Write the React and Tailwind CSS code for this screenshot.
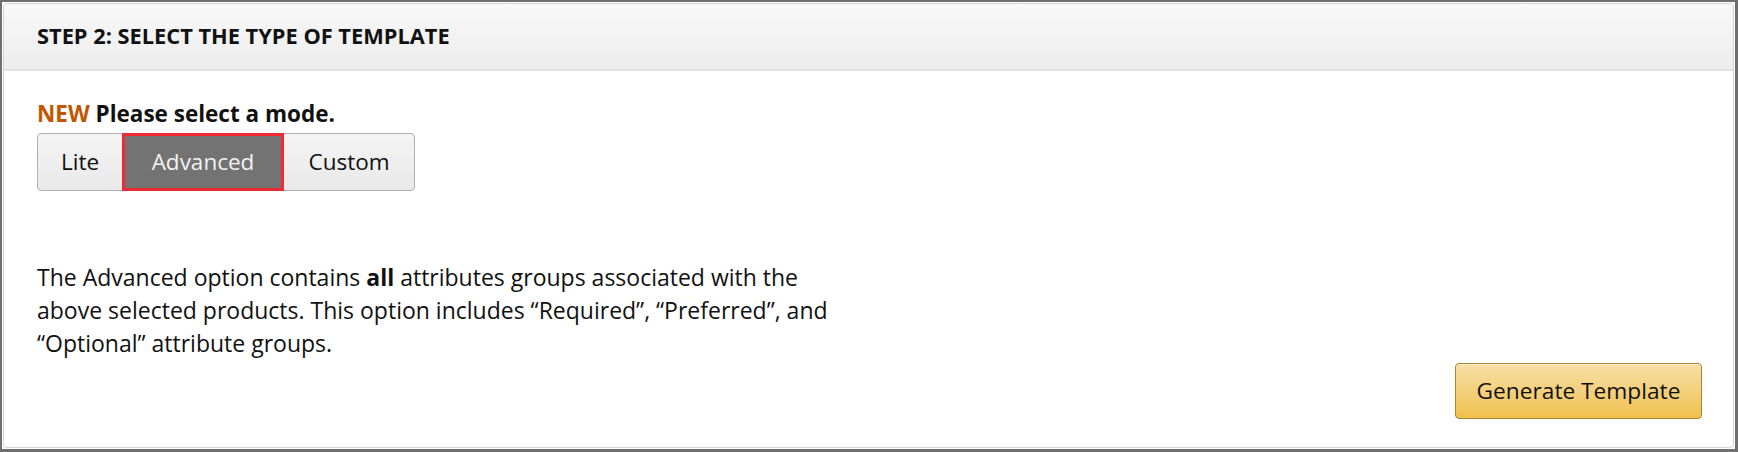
export default function App() {
  const font = { fontFamily: '"Open Sans", "Noto Sans", Arial, sans-serif' };
  return (
    <div
      className="w-[1738px] h-[452px] bg-white border-l-2 border-t-2 border-r-[3px] border-b-[3px] border-[#6f6f6f] p-px flex text-[#111111]"
      style={font}
    >
      <div className="flex-1 flex flex-col border border-[#d5d5d5] rounded-[4px] overflow-hidden">
        <div className="h-[67px] shrink-0 flex items-center pl-[33px] bg-gradient-to-b from-[#f8f8f8] to-[#ededed] border-b-2 border-[#e0e0e0]">
          <span className="text-[21.8px] font-bold">STEP 2: SELECT THE TYPE OF TEMPLATE</span>
        </div>
        <div className="flex-1 flex flex-col pl-[33px] pt-[28px]">
          <div className="text-[22.5px] font-bold leading-[30px]">
            <span className="text-[#c45500]">NEW</span> Please select a mode.
          </div>
          <div className="mt-[4px] flex w-[378px] h-[58px] rounded-[4px] border border-[#adb1b8] bg-gradient-to-b from-[#f4f4f4] to-[#e9e9e9] text-[22.5px]">
            <div className="w-[84px] flex items-center justify-center">Lite</div>
            <div className="w-[162px] -my-px flex items-center justify-center bg-[#737373] text-[#f2f2f2] border-[3px] border-[#ee2a36]">
              Advanced
            </div>
            <div className="flex-1 flex items-center justify-center">Custom</div>
          </div>
          <p className="mt-[70px] max-w-[815px] text-[23px] leading-[33px]">
            The Advanced option contains <b className="font-bold">all</b> attributes groups associated with the above selected products. This option includes “Required”, “Preferred”, and “Optional” attribute groups.
          </p>
          <div className="flex justify-end pr-[31px] mt-[3px]">
            <button className="w-[247px] h-[56px] rounded-[4px] border border-[#a88734] bg-gradient-to-b from-[#f7dfa5] to-[#f0c14b] text-[22.7px] text-[#111111] shadow-[inset_0_1px_0_rgba(255,255,255,0.5)]">
              Generate Template
            </button>
          </div>
        </div>
      </div>
    </div>
  );
}
